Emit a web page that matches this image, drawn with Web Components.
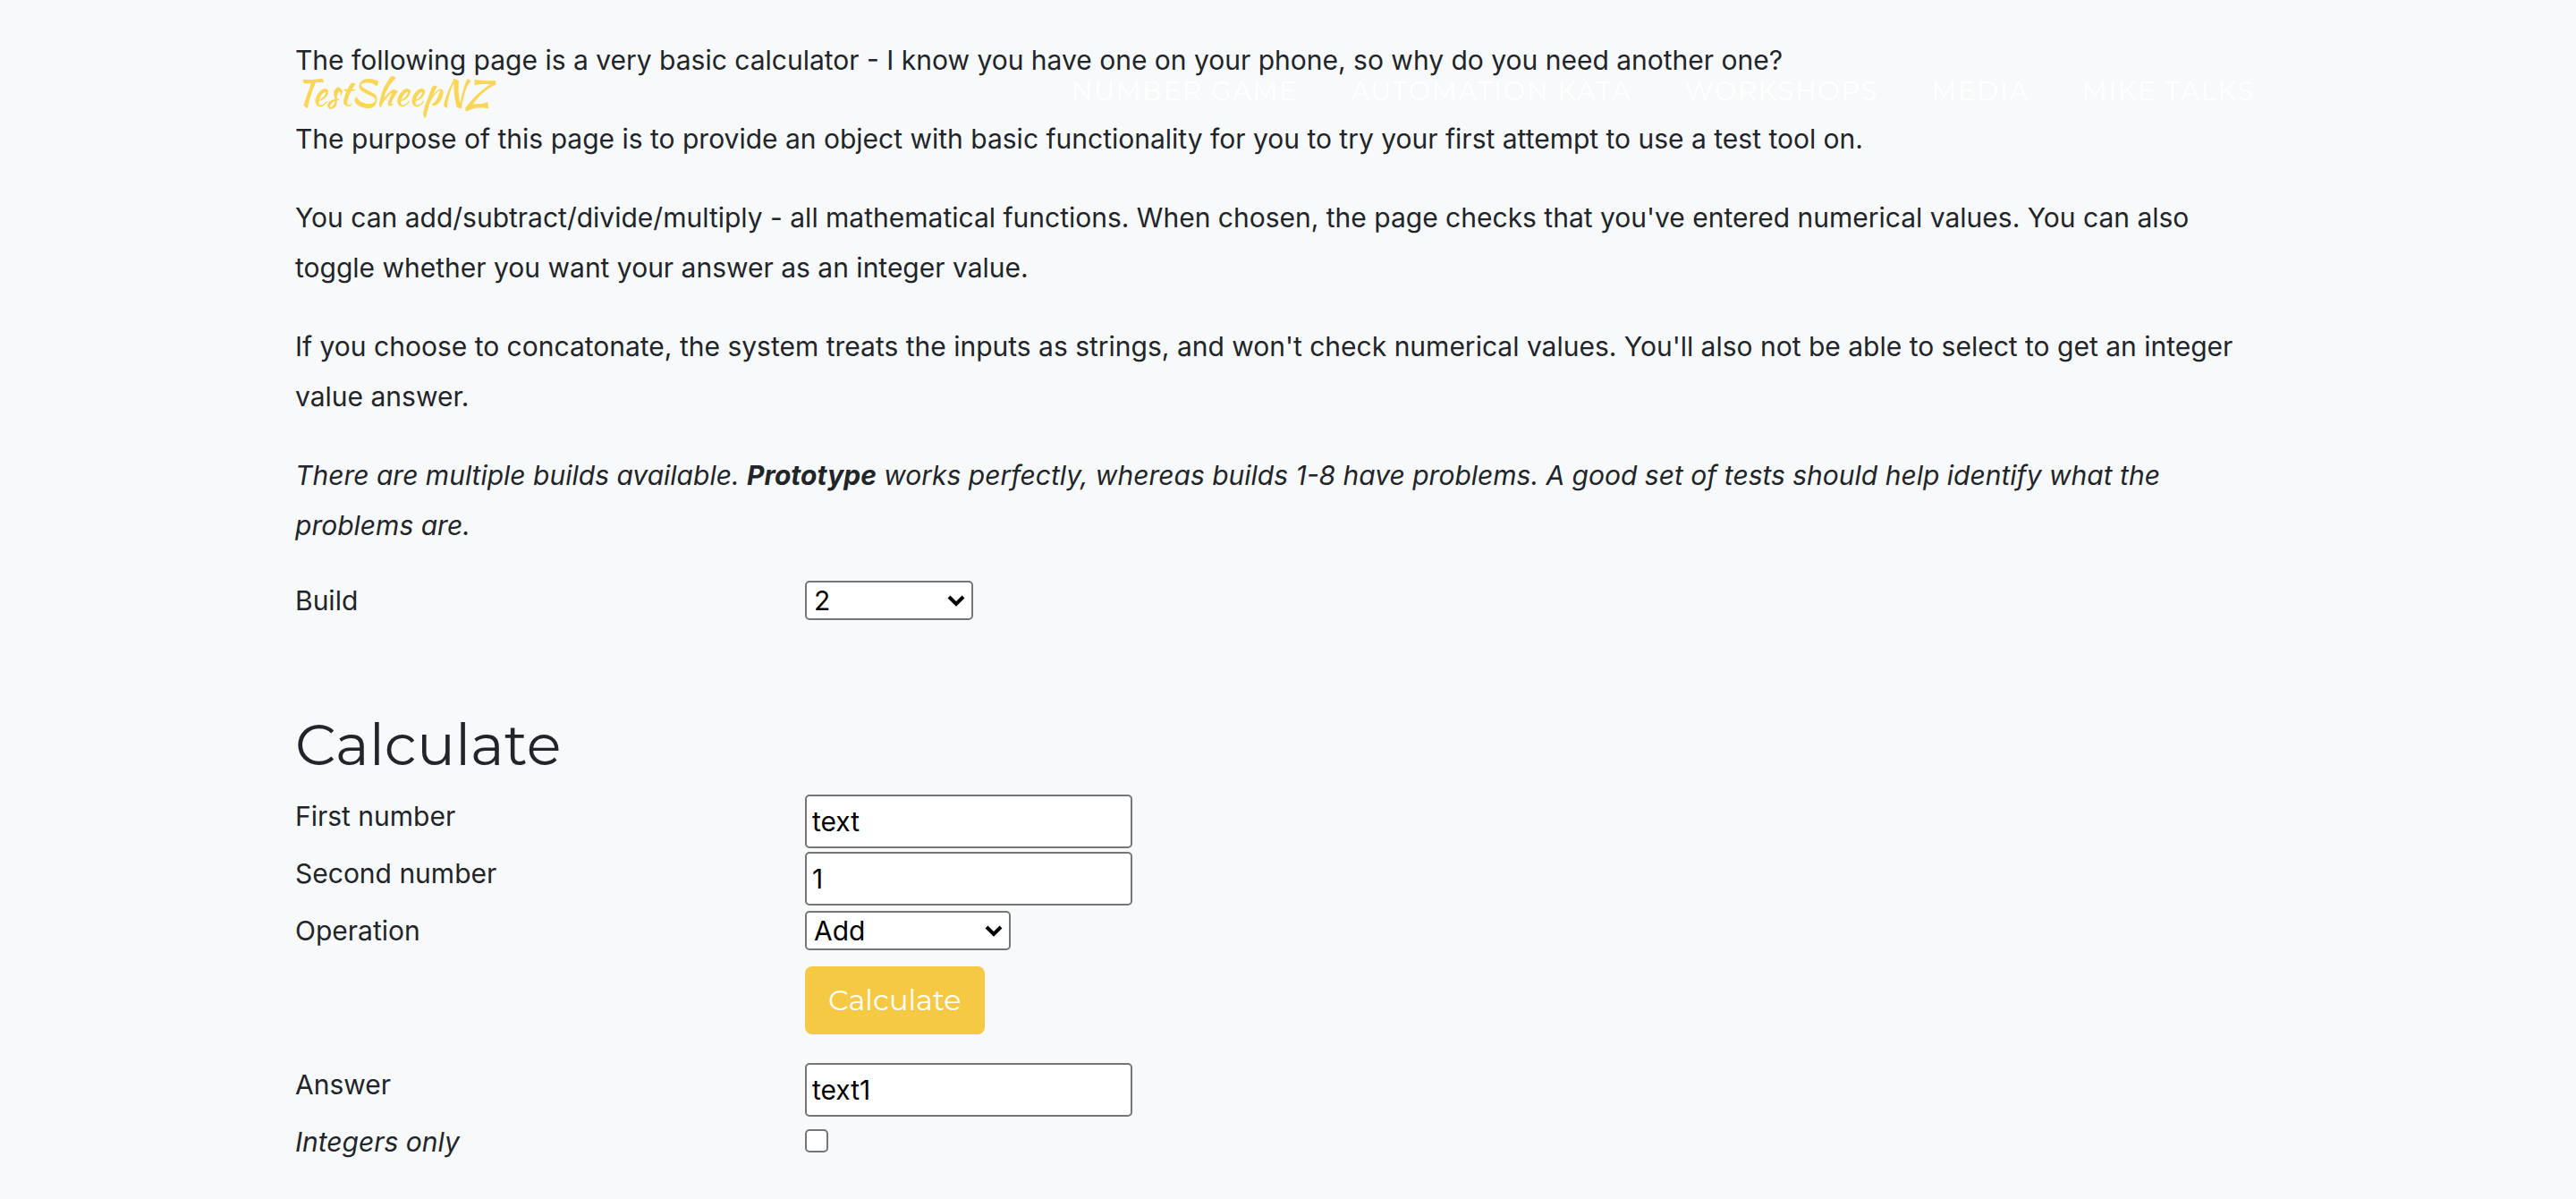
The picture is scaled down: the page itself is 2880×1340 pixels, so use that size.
<!DOCTYPE html>
<html lang="en">
<head>
<meta charset="utf-8">
<title>Basic Calculator</title>
<style>
  body {
    margin: 0;
    min-height: 100vh;
    background: #f8f9fb;
    color: #212529;
    font: 400 30px/56px Inter, "Liberation Sans", sans-serif;
  }
</style>
</head>
<body>
<site-nav></site-nav>
<page-container>
  <intro-text>
    <p>The following page is a very basic calculator - I know you have one on your phone, so why do you need another one?</p>
    <p>The purpose of this page is to provide an object with basic functionality for you to try your first attempt to use a test tool on.</p>
    <p>You can add/subtract/divide/multiply - all mathematical functions. When chosen, the page checks that you've entered numerical values. You can also toggle whether you want your answer as an integer value.</p>
    <p>If you choose to concatonate, the system treats the inputs as strings, and won't check numerical values. You'll also not be able to select to get an integer value answer.</p>
    <p><i>There are multiple builds available. <b>Prototype</b> works perfectly, whereas builds 1-8 have problems. A good set of tests should help identify what the problems are.</i></p>
  </intro-text>
  <calc-form></calc-form>
</page-container>
<script>
const define = (name, html) => {
  const template = document.createElement('template');
  template.innerHTML = html;
  customElements.define(name, class extends HTMLElement {
    constructor() {
      super();
      this.attachShadow({ mode: 'open' }).append(template.content.cloneNode(true));
    }
  });
};

define('page-container', `
  <style>
    :host { display: block; box-sizing: border-box; width: 100%; max-width: 2280px; margin: 0 auto; padding: 39px 30px; }
  </style>
  <slot></slot>`);

define('intro-text', `
  <style>
    :host { display: block; margin-bottom: 28px; padding-right: 20px; }
    ::slotted(p) { margin: 0 0 32px; }
    ::slotted(p:last-child) { margin: 0; }
  </style>
  <slot></slot>`);

define('site-nav', `
  <style>
    :host { position: fixed; inset: 0 0 auto; z-index: 10; display: block; padding: 74px 0 48px; pointer-events: none; }
    nav { box-sizing: border-box; max-width: 2280px; margin: 0 auto; padding: 0 30px; display: flex; align-items: center; justify-content: space-between; }
    a { text-decoration: none; pointer-events: auto; }
    .brand { color: #f9d558; font: 400 40px/60px "Kaushan Script", cursive; }
    ul { display: flex; list-style: none; margin: 0; padding: 0 29px 4px 0; gap: 59px; }
    li { display: flex; }
    li a { color: #fff; font: 400 29px/56px Montserrat, Lato, sans-serif; letter-spacing: 0.06em; text-transform: uppercase; }
  </style>
  <nav>
    <a class="brand" href="#">TestSheepNZ</a>
    <ul>
      <li><a href="#number-game">Number Game</a></li>
      <li><a href="#automation-kata">Automation Kata</a></li>
      <li><a href="#workshops">Workshops</a></li>
      <li><a href="#media">Media</a></li>
      <li><a href="#mike-talks">Mike Talks</a></li>
    </ul>
  </nav>`);

define('calc-form', `
  <style>
    :host { display: block; }
    form { margin: 0; }
    .row { display: grid; grid-template-columns: calc(25% + 15px) 1fr; align-items: start; min-height: 64px; }
    .row > :nth-child(2) { justify-self: start; }
    .action { min-height: 108px; }
    h2 { margin: 87px 0 14px; font: 400 64px/76px Montserrat, Lato, sans-serif; }
    input, select, button { box-sizing: border-box; margin: 0; font: inherit; color: #000; }
    input[type=text], select { background-color: #fff; border: 2px solid #767676; border-radius: 5px; }
    input[type=text] { width: 366px; height: 60px; margin-top: 4px; padding: 2px 6px; line-height: 52px; }
    select {
      appearance: none; height: 44px; margin-top: 6px; padding: 0 8px; line-height: 40px;
      background-repeat: no-repeat; background-position: right 6px center;
      background-image: url("data:image/svg+xml,%3Csvg xmlns='http://www.w3.org/2000/svg' width='22' height='14' viewBox='0 0 22 14'%3E%3Cpath d='M3 3l8 8 8-8' fill='none' stroke='%23000' stroke-width='4'/%3E%3C/svg%3E");
    }
    #build { width: 188px; }
    #operation { width: 230px; }
    button {
      grid-column: 2; justify-self: start; margin-top: 4px; padding: 10px 26px; border: 0; border-radius: 8px;
      background: #f6c945; color: #fff; font: 400 32px/56px Montserrat, Lato, sans-serif;
    }
    input[type=checkbox] {
      appearance: none; width: 26px; height: 26px; margin-top: 14px;
      background: #fff; border: 2px solid #767676; border-radius: 5px;
    }
    input[type=checkbox]:checked { background: #0075ff; }
  </style>
  <form>
    <div class="row">
      <label for="build">Build</label>
      <select id="build">
        <option>Prototype</option><option>1</option><option selected>2</option><option>3</option><option>4</option>
        <option>5</option><option>6</option><option>7</option><option>8</option>
      </select>
    </div>
    <h2>Calculate</h2>
    <div class="row"><label for="first">First number</label><input id="first" type="text" value="text"></div>
    <div class="row"><label for="second">Second number</label><input id="second" type="text" value="1"></div>
    <div class="row">
      <label for="operation">Operation</label>
      <select id="operation">
        <option>Add</option><option>Subtract</option><option>Multiply</option><option>Divide</option><option>Concatenate</option>
      </select>
    </div>
    <div class="row action"><button type="button">Calculate</button></div>
    <div class="row"><label for="answer">Answer</label><input id="answer" type="text" value="text1" readonly></div>
    <div class="row"><label for="integers"><i>Integers only</i></label><input id="integers" type="checkbox"></div>
  </form>`);
</script>
</body>
</html>
